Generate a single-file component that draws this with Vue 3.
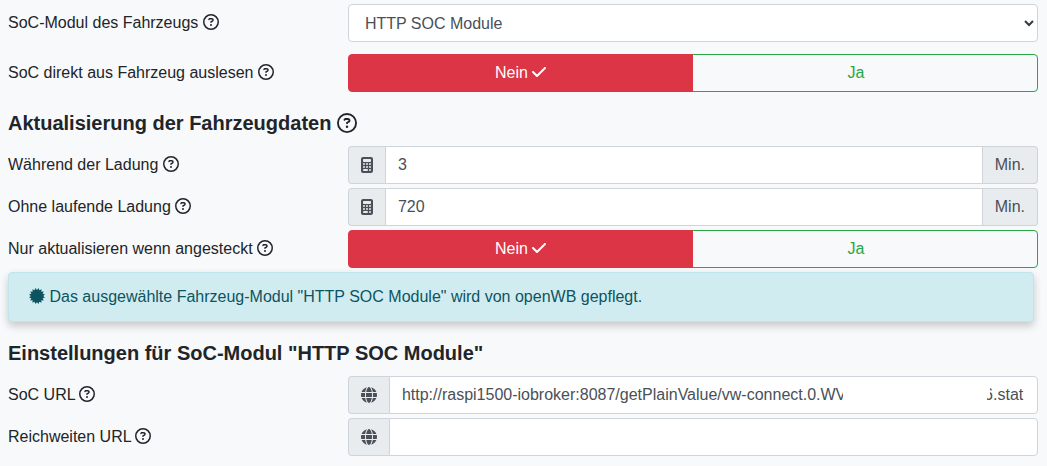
<script setup>
import { ref } from 'vue'

const paths = {
  help: 'M464 256A208 208 0 1 0 48 256a208 208 0 1 0 416 0zM0 256a256 256 0 1 1 512 0A256 256 0 1 1 0 256zm169.8-90.7c7.9-22.3 29.1-37.3 52.8-37.3h58.3c34.9 0 63.1 28.3 63.1 63.1c0 22.6-12.1 43.5-31.7 54.8L280 264.4c-.2 13-10.9 23.6-24 23.6c-13.3 0-24-10.7-24-24V250.5c0-8.6 4.6-16.5 12.1-20.8l44.3-25.4c4.7-2.7 7.6-7.7 7.6-13.1c0-8.4-6.8-15.1-15.1-15.1H222.6c-3.4 0-6.4 2.1-7.5 5.3l-.4 1.2c-4.4 12.5-18.2 19-30.6 14.6s-19-18.2-14.6-30.6l.4-1.2zM224 352a32 32 0 1 1 64 0 32 32 0 1 1 -64 0z',
  check: 'M438.6 105.4c12.5 12.5 12.5 32.8 0 45.3l-256 256c-12.5 12.5-32.8 12.5-45.3 0l-128-128c-12.5-12.5-12.5-32.8 0-45.3s32.8-12.5 45.3 0L160 338.7 393.4 105.4c12.5-12.5 32.8-12.5 45.3 0z',
  calculator: 'M64 0C28.7 0 0 28.7 0 64V448c0 35.3 28.7 64 64 64H320c35.3 0 64-28.7 64-64V64c0-35.3-28.7-64-64-64H64zM96 64H288c17.7 0 32 14.3 32 32v32c0 17.7-14.3 32-32 32H96c-17.7 0-32-14.3-32-32V96c0-17.7 14.3-32 32-32zM64 224a32 32 0 1 1 64 0 32 32 0 1 1 -64 0zM160 224a32 32 0 1 1 64 0 32 32 0 1 1 -64 0zM256 224a32 32 0 1 1 64 0 32 32 0 1 1 -64 0zM64 320a32 32 0 1 1 64 0 32 32 0 1 1 -64 0zM160 320a32 32 0 1 1 64 0 32 32 0 1 1 -64 0zM256 320a32 32 0 1 1 64 0 32 32 0 1 1 -64 0zM96 384H192a32 32 0 1 1 0 64H96a32 32 0 1 1 0-64zM256 416a32 32 0 1 1 64 0 32 32 0 1 1 -64 0z',
  globe: 'M352 256c0 22.2-1.2 43.6-3.3 64H163.3c-2.2-20.4-3.3-41.8-3.3-64s1.2-43.6 3.3-64H348.7c2.2 20.4 3.3 41.8 3.3 64zm28.8-64H503.9c5.3 20.5 8.1 41.9 8.1 64s-2.8 43.5-8.1 64H380.8c2.1-20.6 3.2-42 3.2-64s-1.1-43.4-3.2-64zm112.6-32H376.7c-10-63.9-29.8-117.4-55.3-151.6c78.3 20.7 142 77.5 171.9 151.6zm-149.1 0H167.7c6.1-36.4 15.5-68.6 27-94.7c10.5-23.6 22.2-40.7 33.5-51.5C239.4 3.2 248.7 0 256 0s16.6 3.2 27.8 13.8c11.3 10.8 23 27.9 33.5 51.5c11.6 26 20.9 58.2 27 94.7zm-209 0H18.6C48.6 85.9 112.2 29.1 190.6 8.4C165.1 42.6 145.3 96.1 135.3 160zM8.1 192H131.2c-2.1 20.6-3.2 42-3.2 64s1.1 43.4 3.2 64H8.1C2.8 299.5 0 278.1 0 256s2.8-43.5 8.1-64zM194.7 446.6c-11.6-26-20.9-58.2-27-94.6H344.3c-6.1 36.4-15.5 68.6-27 94.6c-10.5 23.6-22.2 40.7-33.5 51.5C272.6 508.8 263.3 512 256 512s-16.6-3.2-27.8-13.8c-11.3-10.8-23-27.9-33.5-51.5zM135.3 352c10 63.9 29.8 117.4 55.3 151.6C112.2 482.9 48.6 426.1 18.6 352H135.3zm358.1 0c-30 74.1-93.6 130.9-171.9 151.6c25.5-34.2 45.2-87.7 55.3-151.6H493.4z',
}

// Toothed seal outline: 16 teeth alternating between two radii
const sealPoints = Array.from({ length: 32 }, (_, i) => {
  const radius = i % 2 ? 196 : 262
  const angle = ((i + 1) * Math.PI) / 16
  return `${(256 + radius * Math.sin(angle)).toFixed(1)},${(256 - radius * Math.cos(angle)).toFixed(1)}`
}).join(' ')

const socModule = ref('http')
const readDirect = ref(false)
const onlyPlugged = ref(false)
const intervals = ref([
  { id: 'charging', label: 'Während der Ladung', value: '3' },
  { id: 'idle', label: 'Ohne laufende Ladung', value: '720' },
])
const socUrl = ref(
  'http://raspi1500-iobroker:8087/getPlainValue/vw-connect.0.WV' + '\u00a0'.repeat(31) + '6.stat'
)
const rangeUrl = ref('')
</script>

<template>
  <main class="page">
    <div class="row spaced">
      <label class="label" for="soc-module">SoC-Modul des Fahrzeugs
        <svg class="icon" viewBox="0 0 512 512" aria-hidden="true"><path :d="paths.help" /></svg>
      </label>
      <div class="select-wrap">
        <select id="soc-module" v-model="socModule" class="field select">
          <option value="http">HTTP SOC Module</option>
        </select>
        <svg class="chevron" viewBox="0 0 10 7" aria-hidden="true"><path d="M1 1l4 4 4-4" /></svg>
      </div>
    </div>

    <div class="row">
      <span id="read-direct" class="label">SoC direkt aus Fahrzeug auslesen
        <svg class="icon" viewBox="0 0 512 512" aria-hidden="true"><path :d="paths.help" /></svg>
      </span>
      <div class="toggle" role="group" aria-labelledby="read-direct">
        <button type="button" class="btn no" :class="{ active: !readDirect }" @click="readDirect = false">Nein
          <svg class="icon check" viewBox="0 0 448 512" aria-hidden="true"><path :d="paths.check" /></svg>
        </button>
        <button type="button" class="btn yes" :class="{ active: readDirect }" @click="readDirect = true">Ja
          <svg class="icon check" viewBox="0 0 448 512" aria-hidden="true"><path :d="paths.check" /></svg>
        </button>
      </div>
    </div>

    <h2 class="heading">Aktualisierung der Fahrzeugdaten
      <svg class="icon large" viewBox="0 0 512 512" aria-hidden="true"><path :d="paths.help" /></svg>
    </h2>

    <div v-for="item in intervals" :key="item.id" class="row">
      <label class="label" :for="item.id">{{ item.label }}
        <svg class="icon" viewBox="0 0 512 512" aria-hidden="true"><path :d="paths.help" /></svg>
      </label>
      <div class="group">
        <span class="addon"><svg class="icon calc" viewBox="0 0 384 512" aria-hidden="true"><path fill-rule="evenodd" :d="paths.calculator" /></svg></span>
        <input :id="item.id" v-model="item.value" class="field middle" type="text" inputmode="numeric">
        <span class="addon">Min.</span>
      </div>
    </div>

    <div class="row">
      <span id="only-plugged" class="label">Nur aktualisieren wenn angesteckt
        <svg class="icon" viewBox="0 0 512 512" aria-hidden="true"><path :d="paths.help" /></svg>
      </span>
      <div class="toggle" role="group" aria-labelledby="only-plugged">
        <button type="button" class="btn no" :class="{ active: !onlyPlugged }" @click="onlyPlugged = false">Nein
          <svg class="icon check" viewBox="0 0 448 512" aria-hidden="true"><path :d="paths.check" /></svg>
        </button>
        <button type="button" class="btn yes" :class="{ active: onlyPlugged }" @click="onlyPlugged = true">Ja
          <svg class="icon check" viewBox="0 0 448 512" aria-hidden="true"><path :d="paths.check" /></svg>
        </button>
      </div>
    </div>

    <div class="alert" role="status">
      <svg class="icon" viewBox="0 0 512 512" aria-hidden="true"><polygon :points="sealPoints" /></svg>
      Das ausgewählte Fahrzeug-Modul "HTTP SOC Module" wird von openWB gepflegt.
    </div>

    <h2 class="heading">Einstellungen für SoC-Modul "HTTP SOC Module"</h2>

    <div class="row">
      <label class="label" for="soc-url">SoC URL
        <svg class="icon" viewBox="0 0 512 512" aria-hidden="true"><path :d="paths.help" /></svg>
      </label>
      <div class="group">
        <span class="addon"><svg class="icon" viewBox="0 0 512 512" aria-hidden="true"><path :d="paths.globe" /></svg></span>
        <input id="soc-url" v-model="socUrl" class="field last" type="text">
        <span class="mask" aria-hidden="true"></span>
      </div>
    </div>

    <div class="row">
      <label class="label" for="range-url">Reichweiten URL
        <svg class="icon" viewBox="0 0 512 512" aria-hidden="true"><path :d="paths.help" /></svg>
      </label>
      <div class="group">
        <span class="addon"><svg class="icon" viewBox="0 0 512 512" aria-hidden="true"><path :d="paths.globe" /></svg></span>
        <input id="range-url" v-model="rangeUrl" class="field last" type="text">
      </div>
    </div>
  </main>
</template>

<style>
body {
  background: #f8f9fa;
}
</style>

<style scoped>
.page {
  padding: 4px 9px 6px 8px;
  color: #212529;
  font: 16px/24px "Liberation Sans", Arial, sans-serif;
}
.page *,
.page {
  box-sizing: border-box;
}
.row {
  display: grid;
  grid-template-columns: 33% minmax(0, 1fr);
  margin-bottom: 4px;
}
.row.spaced {
  margin-bottom: 12px;
}
.label {
  padding-top: 7px;
}
.icon {
  display: inline-block;
  width: 16px;
  height: 16px;
  fill: currentColor;
  vertical-align: -2px;
}
.icon.check {
  width: 14px;
}
.icon.calc {
  width: 12px;
}
.icon.large {
  width: 20px;
  height: 20px;
  vertical-align: -3px;
}
.heading {
  margin: 0;
  padding: 15px 0 11px;
  font-size: 20px;
  line-height: 24px;
  font-weight: 700;
}
.field {
  width: 100%;
  min-width: 0;
  height: 38px;
  margin: 0;
  padding: 6px 12px;
  border: 1px solid #ced4da;
  border-radius: 4px;
  background: #fff;
  color: #495057;
  font: inherit;
}
.select-wrap,
.group {
  position: relative;
  display: flex;
}
.select {
  appearance: none;
  padding: 7px 16px 5px;
}
.chevron {
  position: absolute;
  right: 4px;
  top: 16px;
  width: 10px;
  height: 7px;
  fill: none;
  stroke: #343a40;
  stroke-width: 2;
  pointer-events: none;
}
.addon {
  display: flex;
  align-items: center;
  flex: none;
  padding: 0 12px;
  border: 1px solid #ced4da;
  background: #e9ecef;
  color: #495057;
}
.addon:first-child {
  border-right: 0;
  border-radius: 4px 0 0 4px;
}
.addon:last-child {
  border-left: 0;
  border-radius: 0 4px 4px 0;
}
.middle {
  flex: 1;
  border-radius: 0;
}
.last {
  flex: 1;
  border-radius: 0 4px 4px 0;
}
.mask {
  position: absolute;
  top: 4px;
  bottom: 4px;
  right: 48px;
  width: 147px;
  background: #fff;
  clip-path: polygon(0 0, 100% 0, 100% 50%, 144px 56%, 144px 100%, 0 100%);
  pointer-events: none;
}
.toggle {
  display: flex;
}
.btn {
  flex: 1;
  height: 38px;
  margin: 0;
  padding: 6px 12px;
  border: 1px solid;
  background: transparent;
  font: inherit;
  cursor: pointer;
}
.btn .check {
  visibility: hidden;
}
.btn.active .check {
  visibility: visible;
}
.btn.no {
  border-color: #dc3545;
  border-radius: 4px 0 0 4px;
  color: #dc3545;
}
.btn.yes {
  margin-left: -1px;
  border-color: #28a745;
  border-radius: 0 4px 4px 0;
  color: #28a745;
}
.btn.active {
  position: relative;
  color: #fff;
}
.btn.no.active {
  background: #dc3545;
}
.btn.yes.active {
  background: #28a745;
}
.alert {
  margin-right: 4px;
  margin-bottom: 4px;
  padding: 12px 20px;
  border: 1px solid #bee5eb;
  border-radius: 4px;
  background: #d1ecf1;
  color: #0c5460;
  box-shadow: 0 4px 8px rgba(0, 0, 0, 0.2);
}
</style>
